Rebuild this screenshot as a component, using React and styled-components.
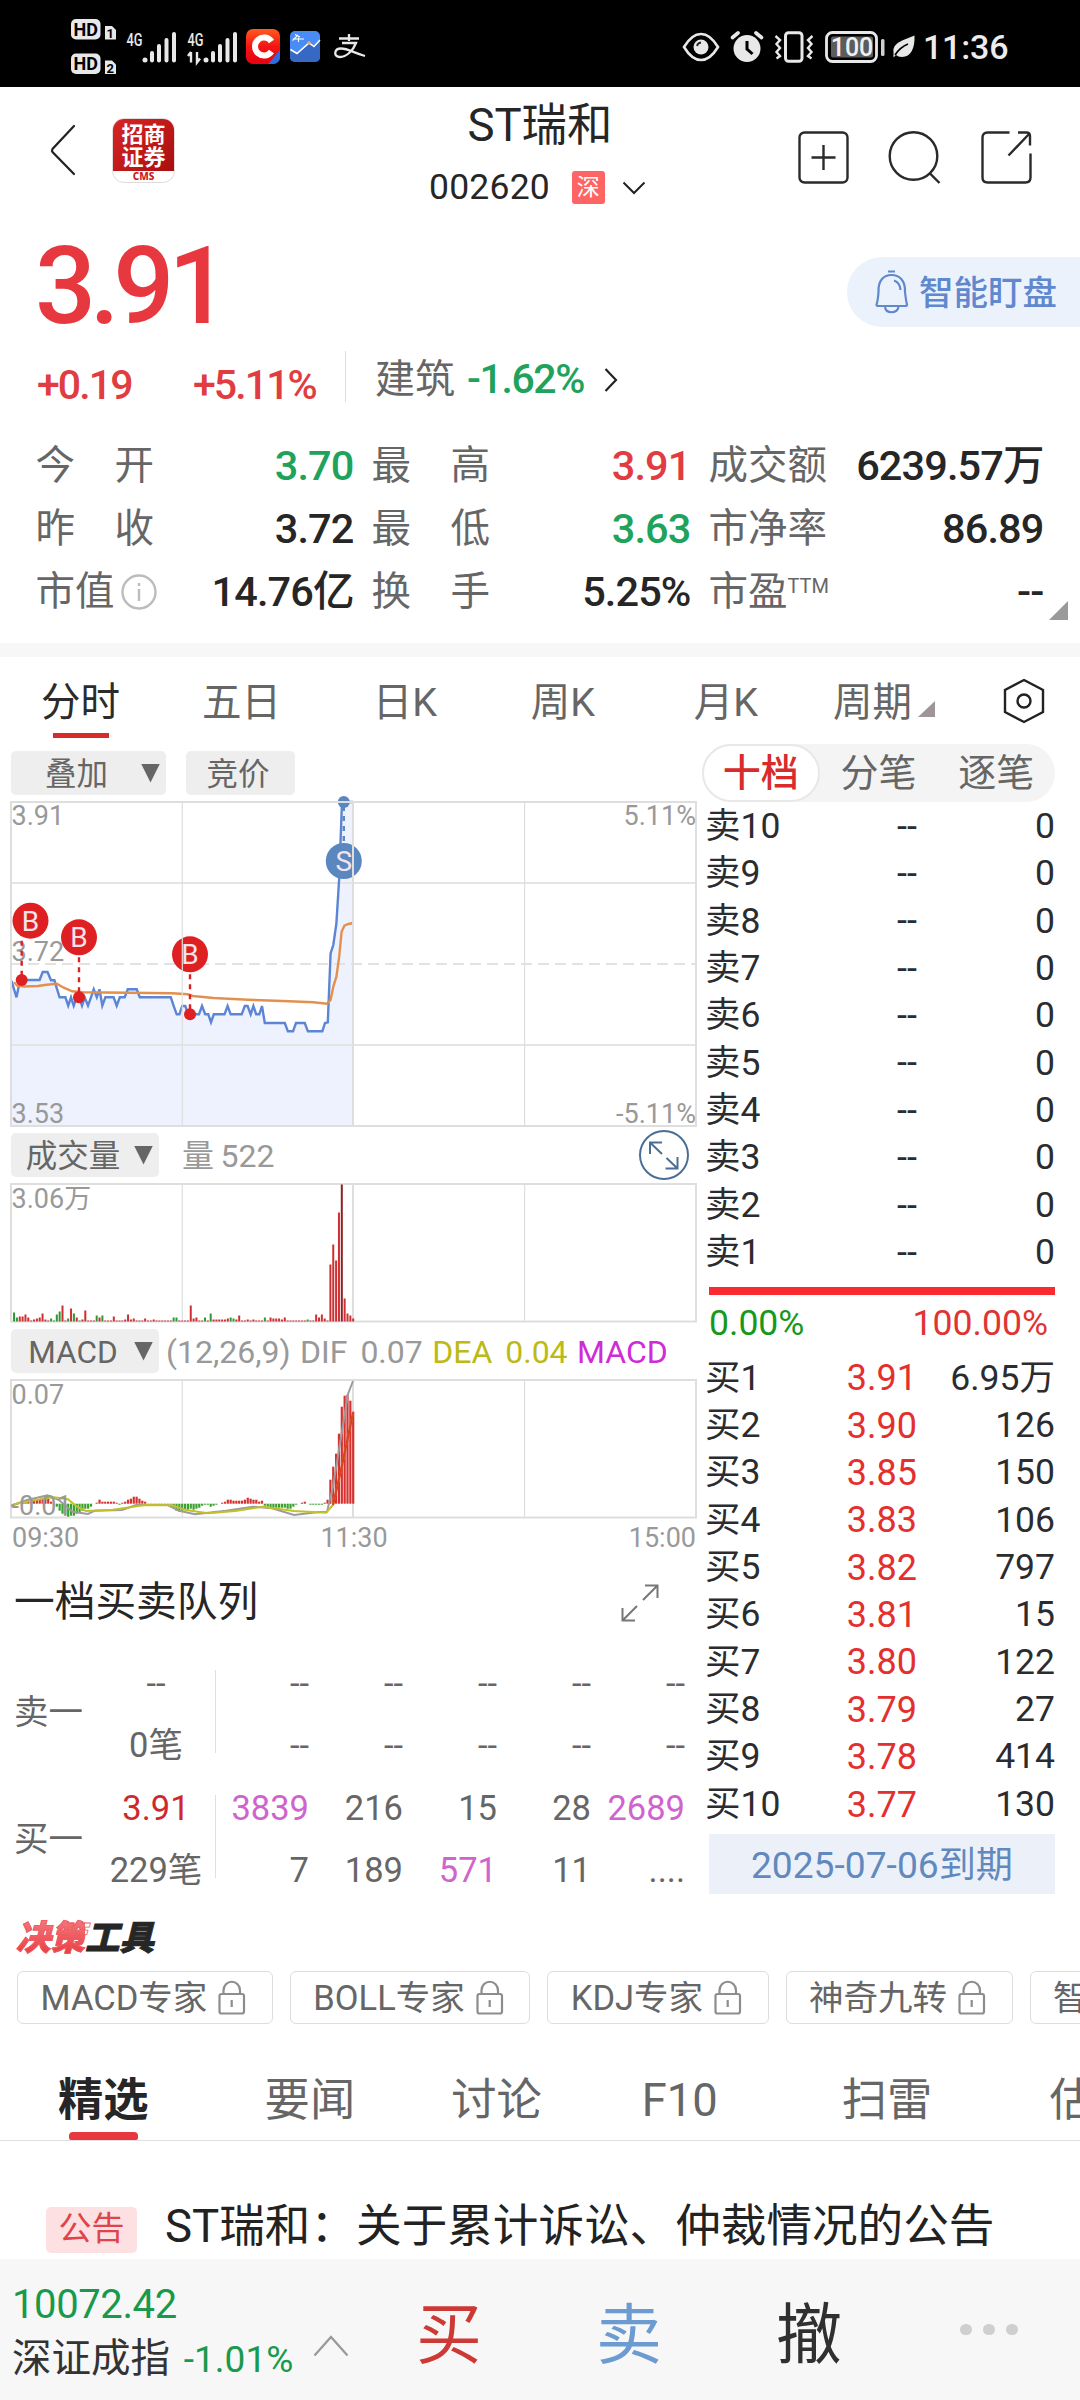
import React from 'react'
import styled, { createGlobalStyle } from 'styled-components'

const RED = '#e03c41'
const GREEN = '#1fa35c'

const stats = [
  { label: '今　开', value: '3.70', color: GREEN },
  { label: '最　高', value: '3.91', color: RED },
  { label: '成交额', value: '6239.57万' },
  { label: '昨　收', value: '3.72' },
  { label: '最　低', value: '3.63', color: GREEN },
  { label: '市净率', value: '86.89' },
  { label: '市值', value: '14.76亿', info: true },
  { label: '换　手', value: '5.25%' },
  { label: '市盈', sup: 'TTM', value: '--' },
]

const sells = [10, 9, 8, 7, 6, 5, 4, 3, 2, 1]

const buys = [
  ['3.91', '6.95万'],
  ['3.90', '126'],
  ['3.85', '150'],
  ['3.83', '106'],
  ['3.82', '797'],
  ['3.81', '15'],
  ['3.80', '122'],
  ['3.79', '27'],
  ['3.78', '414'],
  ['3.77', '130'],
]

const priceLine =
  '11.4,980.7 16.5,997.3 19,985 21.7,980 39.6,980 42.7,972 47.5,972 51,980.3 54.4,980.3 56.8,988.3 59.6,997.3 65.4,997.3 68.2,1005.7 71,997.3 73.7,1005.7 76.4,998 79.2,997.3 82,1005.7 84.7,997.3 88,1005.7 91,997.3 93.7,989.3 96.8,997.3 99.5,989.3 102.3,1005.7 105.4,997.3 113.6,997.3 116.7,1005.7 119.8,997.3 124.7,997.3 127.8,989.3 136.7,989.3 139.8,997.3 170.8,997.3 173.9,1006.7 176.7,1014.3 179.4,1014.3 182.2,1006 185.3,1006 187.7,1013 190,1014.3 199,1014.3 202,1006 205.2,1014.3 208.3,1014.3 211,1022.3 213.8,1014.3 224.5,1014.3 227.6,1006 230.7,1014.3 241.7,1014.3 244.8,1006 247.6,1006 250.7,1014.3 253.4,1006 256.2,1014.3 259.3,1014.3 262,1006 264.8,1023 284.8,1023 287.9,1031.3 293,1031.3 296,1023 304.8,1023 307.9,1031.3 322.3,1031.3 325,1023 327.8,1022.3 330.6,953.3 333.3,945 336.4,923.3 339.2,878 340.6,840 342,802 353,802'

const avgLine =
  '14,982.3 17.2,985.7 24,986.5 38,986 46.5,984.7 56.8,983.7 63.7,987.7 72.3,991.3 82.6,992.3 172,993.3 187.7,994.3 192.8,996 213.5,998 248,999.7 282.4,1001 313.4,1002.3 327,1003.7 330.6,1000 333.3,986.7 336.4,976.7 339.2,956.7 341.6,931.7 344.4,925.7 348.5,924 353,923'

const deaLine =
  '14,1504.3 27,1501.7 41,1499 54,1497.3 68,1499.3 77,1506.7 86,1511 113,1509.7 145,1505 172,1505.3 186,1510 208,1513.3 235,1511 263,1506.7 294,1511 326,1512.7 333,1505 341,1470 348,1437 353,1413'

const difLine =
  '11,1505.7 27,1500 47.5,1495.3 59,1500 72.5,1511.7 88,1514 95,1510.7 122,1510 136,1505 167.6,1505 179,1510.7 195,1514.3 226,1510.7 253,1506.7 272,1508.3 294,1515 317,1512.3 327,1511.7 333,1486.7 348,1394 353,1381'

// minute -> height, negative means a falling minute
const volume = {
  1: -9, 2: -4, 3: 5, 4: 5, 5: 7, 6: 4, 8: 2, 9: 3, 10: 4, 11: 8, 12: 2, 14: -3, 15: -1, 16: -7, 17: -10, 18: 16,
  20: -3, 21: 13, 22: -8, 23: 4, 24: -1, 25: 2, 26: 11, 30: -6, 31: 4, 32: -6, 36: 5, 40: 2, 41: 7, 42: 2, 43: 3,
  47: 3, 50: 2, 57: -4, 58: -4, 63: 16, 64: 3, 65: 4, 68: -4, 70: -8, 71: 2, 72: 2, 73: 2, 74: 2, 75: 2, 76: 3,
  77: -4, 78: -3, 79: 2, 80: 6, 83: 2, 85: 2, 89: -4, 91: 4, 92: 3, 93: 3, 94: 3, 95: 2, 96: 4, 99: 1, 104: -2,
  107: 7, 108: 4, 109: 7, 110: 3, 112: 57, 113: 77, 114: 61, 115: 109, 116: 137, 117: 23, 118: 8, 119: 6, 120: 3,
}

const macd = [
  0, -2, -1, 0, 1, 2, 4, 4, 4, 4, 4, 6, 6, 5, 2, 0, -3, -7, -10, -12, -13, -12, -12, -10, -9, -7, -5, -5, -3, 0, 1, 4, 2,
  2, 2, 2, 2, 1, -1, 1, 2, 4, 5, 7, 7, 5, 3, 2, -1, -1, -1, -1, -1, -1, -1, -1, -1, -4, -7, -8, -7, -6, -6, -5, -6, -5,
  -4, -2, -1, -1, -3, -2, -1, 0, 1, 2, 4, 4, 3, 3, 3, 3, 4, 6, 5, 4, 4, 2, 3, -2, -3, -4, -4, -4, -4, -4, -4, -5, -5,
  -3, -1, 0, 1, 2, 0, -1, -1, -1, -1, -1, 1, 4, 24, 37, 50, 70, 97, 108, 109, 103, 92,
]

const barX = (i) => 10.8 + i * 2.85

const Grid = ({ top, bottom }) => (
  <g stroke="#dedede" fill="none">
    <rect x="11" y={top} width="685" height={bottom - top} strokeWidth="2" />
    <path d={`M182.3 ${top}V${bottom}M524.6 ${top}V${bottom}`} strokeWidth="1.2" />
    <path d={`M353 ${top}V${bottom}`} strokeWidth="2" />
  </g>
)

const Marker = ({ x, y, dotX, dotY, letter, color }) => (
  <g>
    <path d={`M${dotX} ${y}V${dotY}`} stroke={color} strokeWidth="2.4" strokeDasharray="5 5" />
    <circle cx={dotX} cy={dotY} r="6" fill={color} />
    <circle cx={x} cy={y} r="18" fill={color} />
    <text x={x} y={y + 10} fontSize="28" textAnchor="middle">{letter}</text>
  </g>
)

const PriceChart = () => (
  <Chart height={338} viewBox="0 795 697 338">
    <polygon points={`11.4,1126 ${priceLine} 353,1126`} fill="#edf2fe" />
    <path d="M11 883H696M11 1045H696" stroke="#e4e4e4" strokeWidth="2" />
    <path d="M11 964H696" stroke="#e2e2e2" strokeWidth="2" strokeDasharray="11 6" />
    <polyline points={priceLine} fill="none" stroke="#5c85d6" strokeWidth="2.4" />
    <polyline points={avgLine} fill="none" stroke="#e3904f" strokeWidth="2.4" />
    <text x="11.5" y="961">3.72</text>
    <Marker x={30.5} y={920.7} dotX={21.7} dotY={980} letter="B" color="#df2023" />
    <Marker x={79} y={937.3} dotX={79} dotY={997.3} letter="B" color="#df2023" />
    <Marker x={190} y={954.3} dotX={190} dotY={1014.3} letter="B" color="#df2023" />
    <Marker x={343.8} y={861} dotX={343.8} dotY={802} letter="S" color="#5b87c1" />
    <Grid top={802} bottom={1126} />
    <text x="11.5" y="825">3.91</text>
    <text x="11.5" y="1123">3.53</text>
    <text x="696" y="825" textAnchor="end">5.11%</text>
    <text x="696" y="1123" textAnchor="end">-5.11%</text>
  </Chart>
)

const VolumeChart = () => (
  <Chart height={152} viewBox="0 1177 697 152">
    <Grid top={1184} bottom={1321.5} />
    {Array.from({ length: 120 }, (_, k) => {
      const v = volume[k + 1] || 1
      return (
        <rect
          key={k}
          x={barX(k + 1) - 0.6}
          y={1321.5 - Math.abs(v)}
          width="2"
          height={Math.abs(v)}
          fill={v < 0 ? '#2f9a33' : k === 115 ? '#8f2024' : '#cc3033'}
        />
      )
    })}
    <text x="11.5" y="1208">3.06万</text>
  </Chart>
)

const MacdChart = () => (
  <Chart height={151} viewBox="0 1373 697 151">
    <Grid top={1380} bottom={1517.5} />
    {macd.map((v, i) => (
      <rect
        key={i}
        x={barX(i) - 0.7}
        y={v > 0 ? 1503.7 - v : 1503.7}
        width="2.2"
        height={Math.abs(v)}
        fill={v > 0 ? '#d8302f' : '#3aa12c'}
      />
    ))}
    <polyline points={difLine} fill="none" stroke="#9c9c9c" strokeWidth="2" />
    <polyline points={deaLine} fill="none" stroke="#c4bf2a" strokeWidth="2" />
    <path d="M333 1505L341 1470L348 1437L353 1413" fill="none" stroke="#d8421f" strokeWidth="2.2" />
    <text x="11.5" y="1404">0.07</text>
    <text x="11.5" y="1515">-0.01</text>
  </Chart>
)

const Signal = ({ data }) => (
  <svg width="51" height="32" viewBox="0 0 51 32" fill="#e8e8e8">
    <text x="0.5" y="14.5" fontSize="18" fontWeight="500" textLength="16" lengthAdjust="spacingAndGlyphs">4G</text>
    <circle cx="19" cy="29" r="2.5" />
    <rect x="24" y="20" width="4" height="11.5" rx="2" />
    <rect x="31" y="13" width="4" height="18.5" rx="2" />
    <rect x="38.5" y="7" width="4" height="24.5" rx="2" />
    <rect x="46" y="1" width="4" height="30.5" rx="2" />
    {data && <path d="M4 21V31.5M4 21L1 25M10 21V31.5L13 27.5" stroke="#e8e8e8" strokeWidth="2.4" fill="none" />}
  </svg>
)

const HdBadges = () => (
  <svg width="45" height="55" viewBox="0 0 45 55">
    {[0, 34.5].map((y, i) => (
      <g key={y}>
        <rect x="0" y={y} width="29.5" height="20.5" rx="5" fill="#e8e8e8" />
        <text x="14.7" y={y + 16.5} fontSize="18" fontWeight="700" textAnchor="middle" fill="#000">HD</text>
        <path d={`M34 ${y + 7}h7l4 4v9.500h-11z`} fill="#e8e8e8" />
        <text x="39.3" y={y + 19} fontSize="13" fontWeight="700" textAnchor="middle" fill="#000">{i + 1}</text>
      </g>
    ))}
  </svg>
)

const AppC = () => (
  <svg width="34" height="35" viewBox="0 0 34 35">
    <defs>
      <linearGradient id="cGrad" x1="0" y1="0" x2="0" y2="1">
        <stop offset="0" stopColor="#ff5a1f" />
        <stop offset="0.5" stopColor="#f41414" />
        <stop offset="1" stopColor="#e60012" />
      </linearGradient>
    </defs>
    <rect width="34" height="35" rx="7" fill="url(#cGrad)" />
    <path d="M34 21V28a7 7 0 0 1-7 7H22Z" fill="#2d6be0" />
    <path d="M25.5 12.5A9 9 0 1 0 25.500 22.500" fill="none" stroke="#fff" strokeWidth="6" />
  </svg>
)

const AppStock = () => (
  <svg width="30" height="31" viewBox="0 0 30 31">
    <rect width="30" height="31" rx="5" fill="#4a8cf5" />
    <path d="M0 20L7 23L19 12L24 16L30 10V26a5 5 0 0 1-5 5H5a5 5 0 0 1-5-5Z" fill="#3569c4" />
    <path d="M0.500 18.500L7 22.500L19 12L24 15.500L30 9" fill="none" stroke="#fff" strokeWidth="1.5" />
    <path d="M2.500 9.500L8 4M5 3.500L10 6M3 8H14M8.500 6.500V11" stroke="#fff" strokeWidth="1.100" />
    <circle cx="19" cy="12" r="1.8" fill="#e8b06a" />
  </svg>
)

const AppPay = () => (
  <svg width="32" height="25" viewBox="0 0 32 25" fill="none" stroke="#e8e8e8" strokeWidth="2.3">
    <path d="M15 0V7M5 4.500H25M8 9H22C19 17 12 23 6 23C-1 23 0 14.500 7 14.500C14 14.500 20 19 31 22" />
  </svg>
)

const StatusIcons = () => (
  <>
    <svg width="38" height="30" viewBox="0 0 38 30" fill="none" stroke="#e8e8e8" strokeWidth="2.6">
      <path d="M2 15C8 5 13 2 19 2S30 5 36 15C30 25 25 28 19 28S8 25 2 15Z" />
      <circle cx="19" cy="15" r="7.5" fill="#e8e8e8" stroke="none" />
      <path d="M15 14A4.500 4.500 0 0 1 19 10.500" stroke="#222" strokeWidth="1.8" />
    </svg>
    <svg width="32" height="31" viewBox="0 0 32 31">
      <circle cx="16" cy="17.5" r="13.5" fill="#e8e8e8" />
      <path d="M16 10V18L21.500 23" fill="none" stroke="#000" strokeWidth="3" />
      <path d="M1.500 6.500L7 2M30.500 6.500L25 2" stroke="#e8e8e8" strokeWidth="3.6" strokeLinecap="round" />
    </svg>
    <svg width="40" height="32" viewBox="0 0 40 32" fill="none" stroke="#e8e8e8" strokeWidth="3">
      <rect x="11.5" y="1.8" width="16.5" height="28.5" rx="3" />
      <path d="M1.500 5L6 9L2.500 13L6 17L2.500 21L6 25L2.500 27.500M38.500 5L34 9L37.500 13L34 17L37.500 21L34 25L37.500 27.500" strokeWidth="2.4" />
    </svg>
    <svg width="60" height="32" viewBox="0 0 60 32">
      <rect x="1.5" y="1.5" width="50" height="29" rx="6" fill="none" stroke="#e8e8e8" strokeWidth="2.8" />
      <rect x="6" y="5.5" width="42" height="21" rx="2" fill="#5c5c5c" />
      <text x="27" y="24.5" fontSize="25" fontWeight="500" textAnchor="middle" fill="#f0f0f0">100</text>
      <rect x="56" y="8" width="3.5" height="17" rx="1.5" fill="#d0d0d0" />
    </svg>
    <svg width="22" height="23" viewBox="0 0 22 23">
      <path d="M21.500 0.500C22 13 18 22 9 22C6 22 4.500 21 3 20L0.500 22.500L0.500 17C-0.500 7 12 5 21.500 0.500Z" fill="#e8e8e8" />
      <path d="M2 20C6 14 10 11 15 9" stroke="#000" strokeWidth="1.8" fill="none" />
    </svg>
  </>
)

const Lock = () => (
  <svg width="28" height="36" viewBox="0 0 28 36" fill="none" stroke="#8d8d8d" strokeWidth="2.2">
    <rect x="1.5" y="14" width="24.5" height="19.5" rx="2" />
    <path d="M5.500 14V10.500a8.200 8.700 0 0 1 16.500 0V14M13.700 20V27" />
  </svg>
)

const Stat = ({ label, value, color, info, sup }) => (
  <StatCell>
    <StatLabel>
      {label}
      {sup && <sup>{sup}</sup>}
      {info && (
        <svg width="36" height="36" viewBox="0 0 36 36" fill="none" stroke="#bcbcbc" strokeWidth="2.4">
          <circle cx="18" cy="18" r="16.5" />
          <path d="M18 15V27M18 9V12" />
        </svg>
      )}
    </StatLabel>
    <StatValue $color={color}>{value}</StatValue>
  </StatCell>
)

const QueueBlock = ({ name, price, count, rows, red }) => (
  <QueueBox>
    <QueueName $red={red}>{name}</QueueName>
    <QueueTotals>
      <QueueCell $color={red && '#cf2a2b'}>{price}</QueueCell>
      <QueueCell>{count}</QueueCell>
    </QueueTotals>
    <QueueLine />
    <QueueGrid>
      {rows.map((v, i) => (
        <QueueCell key={i} $end $color={['3839', '2689', '571'].includes(v) && '#cf64cf'}>{v}</QueueCell>
      ))}
    </QueueGrid>
  </QueueBox>
)

const App = () => {
  return (
    <>
      <GlobalStyle />
      <Page>
        <StatusBar>
          <StatusLeft>
            <HdBadges />
            <Signal />
            <Signal data />
            <AppC />
            <AppStock />
            <AppPay />
          </StatusLeft>
          <StatusRight>
            <StatusIcons />
            <Clock>11:36</Clock>
          </StatusRight>
        </StatusBar>

        <Header>
          <HeaderLeft>
            <svg width="26" height="52" viewBox="0 0 26 52" fill="none" stroke="#222" strokeWidth="2.2" strokeLinecap="round">
              <path d="M24 2L2.500 25Q1.500 26.500 2.500 28L24 50" />
            </svg>
            <BrokerLogo>
              <BrokerName>招商<br />证券</BrokerName>
              <BrokerCode>CMS</BrokerCode>
            </BrokerLogo>
          </HeaderLeft>
          <HeaderTitle>
            <StockName>ST瑞和</StockName>
            <StockCode>
              002620
              <Exchange>深</Exchange>
              <svg width="24" height="14" viewBox="0 0 24 14" fill="none" stroke="#222" strokeWidth="2">
                <path d="M1.500 1.500L12 12L22.500 1.500" />
              </svg>
            </StockCode>
          </HeaderTitle>
          <HeaderIcons>
            <svg width="51" height="53" viewBox="0 0 51 53" fill="none" stroke="#2a2a2a" strokeWidth="2.4">
              <rect x="1.5" y="1.5" width="48" height="50" rx="5" />
              <path d="M25.500 14V39M13.500 26.500H37.500" />
            </svg>
            <svg width="52" height="53" viewBox="0 0 52 53" fill="none" stroke="#2a2a2a" strokeWidth="2.4">
              <circle cx="24.5" cy="25" r="23.8" />
              <path d="M40.500 42L50.500 52" />
            </svg>
            <svg width="51" height="53" viewBox="0 0 51 53" fill="none" stroke="#2a2a2a" strokeWidth="2.4">
              <path d="M28.500 1.500H6.500Q1.500 1.500 1.500 6.500V46.500Q1.500 51.500 6.500 51.500H44.500Q49.500 51.500 49.500 46.500V22.500" />
              <path d="M37 1.500H45.500Q49 1.500 49 5V14.500M48.500 2.500L27.500 24.500" />
            </svg>
          </HeaderIcons>
        </Header>

        <PriceRow>
          <Price>3.91</Price>
          <WatchPill>
            <svg width="34" height="44" viewBox="0 0 34 44" fill="none" stroke="#5f88cf" strokeWidth="2.2">
              <path d="M13 1.500H20M1.500 34.500Q3 30 3.500 22C3 10 9 5 16.500 5S30.500 10 30 22Q31 31 32 34.500Q32 36 30 36H3.500Q1.500 36 1.500 34.500ZM10 37C11 44 22 44 23.500 37M19 10.500Q25 12.500 25.500 20" />
            </svg>
            <span>智能盯盘</span>
          </WatchPill>
        </PriceRow>

        <ChangeRow>
          <Change $width={156}>+0.19</Change>
          <Change $width={153}>+5.11%</Change>
          <ChangeDivider />
          <Industry>
            建筑 <b>-1.62%</b>
            <svg width="14" height="24" viewBox="0 0 14 24" fill="none" stroke="#222" strokeWidth="2.2">
              <path d="M1.500 1L12 12L1.500 23" />
            </svg>
          </Industry>
        </ChangeRow>

        <Stats>
          {stats.map((s) => (
            <Stat key={s.label} {...s} />
          ))}
          <StatsCorner />
        </Stats>
        <Band />

        <PeriodTabs>
          <PeriodTab $active>分时</PeriodTab>
          <PeriodTab>五日</PeriodTab>
          <PeriodTab>日K</PeriodTab>
          <PeriodTab>周K</PeriodTab>
          <PeriodTab>月K</PeriodTab>
          <PeriodMore>周期<i /></PeriodMore>
          <svg width="42" height="46" viewBox="0 0 42 46" fill="none" stroke="#222" strokeWidth="2.4">
            <path d="M21 2L40 12V34L21 44L2 34V12Z" />
            <circle cx="21" cy="23" r="6.5" />
          </svg>
        </PeriodTabs>

        <Market>
          <Left>
            <ToolRow $gap={20}>
              <ToolButton $width={155}>
                <span>叠加</span>
                <Caret />
              </ToolButton>
              <ToolButton $width={109}>
                <span>竞价</span>
              </ToolButton>
            </ToolRow>
            <PriceChart />
            <ToolRow $gap={23}>
              <ToolButton $width={148}>
                <span>成交量</span>
                <Caret />
              </ToolButton>
              <Legend>量 522</Legend>
              <svg width="50" height="50" viewBox="0 0 50 50" fill="none" stroke="#4a6f96" strokeWidth="2">
                <circle cx="25" cy="25" r="24" />
                <path d="M23 24L11 12.500M11 24V12.500H23M27.500 28L38.500 38.500M38.500 27V38.500H26.500" />
              </svg>
            </ToolRow>
            <VolumeChart />
            <ToolRow $gap={7}>
              <ToolButton $width={148}>
                <span>MACD</span>
                <Caret />
              </ToolButton>
              <MacdLegend>
                <Legend>(12,26,9)</Legend>
                <Legend>DIF&nbsp; 0.07</Legend>
                <Legend $color="#bdb915">DEA&nbsp; 0.04</Legend>
                <Legend $color="#cf2bd6">MACD</Legend>
              </MacdLegend>
            </ToolRow>
            <MacdChart />
            <Times>
              <span>09:30</span>
              <span>11:30</span>
              <span>15:00</span>
            </Times>

            <QueueTitle>
              一档买卖队列
              <svg width="38" height="38" viewBox="0 0 38 38" fill="none" stroke="#777" strokeWidth="2">
                <path d="M22 16L36.500 1.500M24 1.500H36.500V14M16 22L1.500 36.500M1.500 24V36.500H14" />
              </svg>
            </QueueTitle>
            <QueueBlock name="卖一" price="--" count="0笔" rows={Array(10).fill('--')} />
            <QueueBlock
              name="买一"
              price="3.91"
              count="229笔"
              red
              rows={['3839', '216', '15', '28', '2689', '7', '189', '571', '11', '....']}
            />
          </Left>

          <Right>
            <Segments>
              <Segment $active>十档</Segment>
              <Segment>分笔</Segment>
              <Segment>逐笔</Segment>
            </Segments>
            {sells.map((n) => (
              <BookRow key={n}>
                <span>卖{n}</span>
                <span>--</span>
                <span>0</span>
              </BookRow>
            ))}
            <RatioBar />
            <Ratio>
              <span>0.00%</span>
              <span>100.00%</span>
            </Ratio>
            {buys.map(([price, amount], i) => (
              <BookRow key={price} $red>
                <span>买{i + 1}</span>
                <span>{price}</span>
                <span>{amount}</span>
              </BookRow>
            ))}
            <Expire>2025-07-06到期</Expire>
          </Right>
        </Market>

        <ToolsTitle>
          <em>决策</em>工具
        </ToolsTitle>
        <Chips>
          {['MACD专家', 'BOLL专家', 'KDJ专家', '神奇九转', '智能'].map((c) => (
            <Chip key={c}>
              {c}
              <Lock />
            </Chip>
          ))}
        </Chips>

        <NewsTabs>
          <NewsTab $active $left={58}>精选</NewsTab>
          <NewsTab $left={116}>要闻</NewsTab>
          <NewsTab $left={96}>讨论</NewsTab>
          <NewsTab $left={100}>F10</NewsTab>
          <NewsTab $left={124}>扫雷</NewsTab>
          <NewsTab $left={117}>估值</NewsTab>
        </NewsTabs>
        <News>
          <NewsBadge>公告</NewsBadge>
          <NewsTitle>ST瑞和：关于累计诉讼、仲裁情况的公告</NewsTitle>
        </News>

        <BottomBar>
          <IndexBox>
            <IndexValue>10072.42</IndexValue>
            <IndexName>
              深证成指 <span>-1.01%</span>
            </IndexName>
          </IndexBox>
          <svg width="36" height="22" viewBox="0 0 36 22" fill="none" stroke="#999" strokeWidth="2.2">
            <path d="M1.500 20.500L18 2L34.500 20.500" />
          </svg>
          <Action $color="#cd3a36">买</Action>
          <Action $color="#6b9bd0">卖</Action>
          <Action $color="#303030">撤</Action>
          <More>
            <i />
            <i />
            <i />
          </More>
        </BottomBar>
      </Page>
    </>
  )
}

const GlobalStyle = createGlobalStyle`
  * {
    box-sizing: border-box;
  }

  body {
    margin: 0;
    background: #fff;
  }

  svg {
    display: block;
    flex: none;
    overflow: visible;
  }
`

const Page = styled.div`
  display: flex;
  flex-direction: column;
  width: 1080px;
  height: 2400px;
  overflow: hidden;
  background: #fff;
  color: #262626;
  font-family: Roboto, "Noto Sans CJK SC", sans-serif;
  line-height: 1;
  white-space: nowrap;

  > * {
    flex: none;
  }
`

const StatusBar = styled.div`
  display: flex;
  justify-content: space-between;
  height: 87px;
  padding: 6px 71px 0;
  background: #000;
`

const StatusLeft = styled.div`
  display: flex;
  align-items: center;
  gap: 10px;

  svg:nth-of-type(4) {
    margin-left: -2px;
  }

  svg:nth-of-type(6) {
    margin-left: 4px;
  }
`

const StatusRight = styled.div`
  display: flex;
  align-items: center;
  gap: 11px;

  svg:nth-of-type(5) {
    margin-left: -3px;
  }
`

const Clock = styled.span`
  width: 86px;
  margin-left: -3px;
  font-size: 34px;
  font-weight: 500;
  letter-spacing: -0.2px;
  color: #ececec;
`

const Header = styled.div`
  display: grid;
  grid-template-columns: 1fr auto 1fr;
  height: 138px;
  padding: 0 48px 0 50px;
`

const HeaderLeft = styled.div`
  display: flex;
  align-items: center;
  gap: 36px;
  padding-bottom: 12px;
`

const BrokerLogo = styled.div`
  width: 63px;
  height: 65px;
  overflow: hidden;
  border-radius: 12px;
  border: 1px solid #e3dada;
  background: #fff;
  text-align: center;
`

const BrokerName = styled.div`
  height: 52px;
  padding-top: 4px;
  background: linear-gradient(135deg, #d92424, #a80f10);
  color: #fff;
  font-size: 22px;
  font-weight: 700;
  line-height: 23px;
`

const BrokerCode = styled.div`
  font-family: "Noto Sans", sans-serif;
  font-size: 10px;
  font-weight: 800;
  line-height: 10px;
  color: #c81d1f;
`

const HeaderTitle = styled.div`
  display: flex;
  flex-direction: column;
  align-items: center;
  padding-top: 16px;
`

const StockName = styled.div`
  margin-right: 2px;
  font-size: 45.5px;
  line-height: 46px;
`

const StockCode = styled.div`
  display: flex;
  align-items: center;
  margin-top: 21px;
  margin-right: 7px;
  font-size: 35.5px;
  letter-spacing: 0.2px;
`

const Exchange = styled.span`
  width: 33px;
  height: 33px;
  margin: 0 17px 0 22px;
  border-radius: 3px;
  background: #ff6464;
  color: #fff;
  font-size: 23px;
  line-height: 34px;
  text-align: center;
`

const HeaderIcons = styled.div`
  display: flex;
  justify-content: flex-end;
  align-items: center;
  gap: 40px;
  padding-top: 3px;
`

const PriceRow = styled.div`
  display: flex;
  justify-content: space-between;
  height: 117px;
  padding-left: 35px;
`

const Price = styled.div`
  font-size: 107.5px;
  font-weight: 500;
  line-height: 122px;
  letter-spacing: -6.3px;
  color: #e8383f;
`

const WatchPill = styled.div`
  display: flex;
  align-items: center;
  gap: 10px;
  width: 233px;
  height: 70px;
  margin-top: 32px;
  padding-left: 28px;
  border-radius: 35px 0 0 35px;
  background: #ecf2fb;
  color: #5f88cf;
  font-size: 34.5px;
  font-weight: 500;

  span {
    padding-top: 2px;
  }
`

const ChangeRow = styled.div`
  display: flex;
  align-items: flex-start;
  height: 92px;
  padding-left: 37px;
`

const Change = styled.div`
  width: ${(p) => p.$width}px;
  padding-top: 22px;
  font-size: 41px;
  font-weight: 500;
  letter-spacing: -1.9px;
  line-height: 43px;
  color: ${RED};
`

const ChangeDivider = styled.div`
  width: 1px;
  height: 51px;
  margin: 9px 29px 0 -1px;
  background: #ddd;
`

const Industry = styled.div`
  display: flex;
  align-items: center;
  padding-top: 16px;
  font-size: 40px;
  line-height: 43px;
  color: #666;

  b {
    margin: 0 20px 0 12px;
    font-size: 41px;
    font-weight: 500;
    letter-spacing: -1.4px;
    color: ${GREEN};
  }
`

const Stats = styled.div`
  position: relative;
  display: grid;
  grid-template-columns: 318px 319px 335px;
  grid-auto-rows: 63px;
  column-gap: 18px;
  height: 209px;
  padding-left: 35.5px;
`

const StatCell = styled.div`
  display: flex;
  justify-content: space-between;
  align-items: center;
`

const StatLabel = styled.div`
  display: flex;
  align-items: center;
  font-size: 39.5px;
  color: #666;

  sup {
    margin-bottom: 12px;
    font-size: 20px;
    line-height: 20px;
  }

  svg {
    margin-left: 6px;
  }
`

const StatValue = styled.div`
  font-size: 41.5px;
  font-weight: 500;
  letter-spacing: -0.9px;
  color: ${(p) => p.$color || '#262626'};
`

const StatsCorner = styled.i`
  position: absolute;
  right: 12px;
  bottom: 23px;
  width: 19px;
  height: 19px;
  background: #9a9a9a;
  clip-path: polygon(100% 0, 100% 100%, 0 100%);
`

const Band = styled.div`
  height: 14px;
  background: #f7f7f7;
`

const PeriodTabs = styled.div`
  display: grid;
  grid-template-columns: 161px 161px 166px 150px 176px 1fr auto;
  height: 87px;
  padding: 25px 35px 0 0;

  > svg {
    margin-top: -4px;
  }
`

const PeriodTab = styled.div`
  display: flex;
  flex-direction: column;
  align-items: center;
  gap: 9px;
  font-size: 39.5px;
  line-height: 42px;
  color: ${(p) => (p.$active ? '#2b2b2b' : '#666')};

  &::after {
    content: "";
    width: 56px;
    height: 5px;
    background: ${(p) => (p.$active ? '#d92b2e' : 'transparent')};
  }
`

const PeriodMore = styled.div`
  display: flex;
  padding-left: 19px;
  font-size: 39.5px;
  line-height: 42px;
  color: #666;

  i {
    width: 17px;
    height: 16px;
    margin: 19px 0 0 6px;
    background: #9f9596;
    clip-path: polygon(100% 0, 100% 100%, 0 100%);
  }
`

const Market = styled.div`
  display: flex;
  height: 1158px;
`

const Left = styled.div`
  width: 697px;
  padding-top: 7px;
`

const ToolRow = styled.div`
  display: flex;
  align-items: center;
  gap: ${(p) => p.$gap}px;
  height: 44px;
  padding-left: 11px;

  > svg {
    margin: 0 8px 0 auto;
  }
`

const ToolButton = styled.div`
  display: flex;
  align-items: center;
  width: ${(p) => p.$width}px;
  height: 44px;
  padding-right: 6px;
  border-radius: 5px;
  background: #eee;
  color: #666;
  font-size: 31.5px;

  span {
    flex: 1;
    padding: 3px 0 0 1px;
    text-align: center;
  }
`

const Caret = styled.i`
  width: 19px;
  height: 19px;
  background: #666;
  clip-path: polygon(0 0, 100% 0, 50% 100%);
`

const Legend = styled.span`
  padding-top: 2px;
  font-size: 32px;
  word-spacing: -1.5px;
  color: ${(p) => p.$color || '#999'};
`

const MacdLegend = styled.div`
  display: flex;
  gap: 9.5px;
`

const Chart = styled.svg`
  width: 697px;
  height: ${(p) => p.height}px;

  text {
    font-size: 27px;
    fill: #999;
  }

  g text {
    font-size: 28px;
    fill: #f4e4ea;
  }
`

const Times = styled.div`
  display: flex;
  justify-content: space-between;
  height: 30px;
  padding: 1px 1px 0 12px;
  font-size: 27px;
  color: #999;
`

const QueueTitle = styled.div`
  display: flex;
  justify-content: space-between;
  align-items: center;
  height: 98px;
  padding: 0 38px 1px 14px;
  font-size: 40.7px;
`

const QueueBox = styled.div`
  display: flex;
  align-items: center;
  height: 125px;
  font-size: 34.5px;
  color: #666;
`

const QueueName = styled.div`
  width: 100px;
  padding: 0 0 ${(p) => (p.$red ? 0 : 4)}px 14px;
`

const QueueTotals = styled.div`
  display: grid;
  grid-template-rows: 62.5px 62.5px;
  width: 112px;
  justify-items: center;
`

const QueueLine = styled.div`
  width: 1px;
  height: 83px;
  margin: 0 -1px 6px 3px;
  background: #e0e0e0;
`

const QueueGrid = styled.div`
  display: grid;
  grid-template-columns: repeat(5, 94px);
  grid-auto-rows: 62.5px;
`

const QueueCell = styled.div`
  display: flex;
  align-items: center;
  justify-content: ${(p) => (p.$end ? 'flex-end' : 'center')};
  padding-bottom: 1px;
  color: ${(p) => p.$color || '#666'};
`

const Right = styled.div`
  width: 358px;
  padding-left: 12px;
`

const Segments = styled.div`
  display: flex;
  width: 353px;
  height: 58px;
  margin-left: -7px;
  border-radius: 29px;
  background: #f4f4f4;
`

const Segment = styled.div`
  flex: 1;
  border: 2px solid ${(p) => (p.$active ? '#e8e8e8' : 'transparent')};
  border-radius: 29px;
  background: ${(p) => (p.$active ? '#fff' : 'transparent')};
  color: ${(p) => (p.$active ? '#d92b2b' : '#666')};
  font-size: 38px;
  font-weight: ${(p) => (p.$active ? 500 : 400)};
  line-height: 55px;
  text-align: center;
`

const BookRow = styled.div`
  display: grid;
  grid-template-columns: 100px 112px 138px;
  align-items: center;
  height: 47.36px;
  margin-left: -4px;
  padding-top: 2px;
  font-size: 35.5px;
  color: #2a2c30;

  span + span {
    text-align: right;
  }

  span:nth-child(2) {
    font-size: 36px;
    color: ${(p) => (p.$red ? '#e3302f' : 'inherit')};
  }
`

const RatioBar = styled.div`
  height: 8px;
  margin-top: 11px;
  background: #f92b30;
`

const Ratio = styled.div`
  display: flex;
  justify-content: space-between;
  height: 59px;
  padding: 11px 7px 0 0;
  font-size: 35.6px;
  color: #16991a;

  span + span {
    color: #e03434;
  }
`

const Expire = styled.div`
  height: 60px;
  margin-top: 7px;
  background: #ecf1f9;
  color: #6189bd;
  font-size: 37.2px;
  line-height: 62px;
  text-align: center;
`

const ToolsTitle = styled.div`
  height: 69px;
  padding: 19px 0 0 16px;
  font-size: 34.5px;
  font-style: italic;
  font-weight: 900;
  color: #262626;
  -webkit-text-stroke: 0.8px #262626;

  em {
    background: linear-gradient(#f47a7e, #e8383f);
    background-clip: text;
    -webkit-background-clip: text;
    -webkit-text-stroke: 0.8px #ee5a5f;
    color: transparent;
  }
`

const Chips = styled.div`
  display: flex;
  gap: 17px;
  padding-left: 17px;
`

const Chip = styled.div`
  display: flex;
  flex: none;
  align-items: center;
  gap: 11px;
  height: 53px;
  padding: 1px 25.5px 0 22.5px;
  border: 1px solid #ddd;
  border-radius: 6px;
  color: #666;
  font-size: 34.5px;
`

const NewsTabs = styled.div`
  display: flex;
  height: 117px;
  padding-top: 54px;
  border-bottom: 1px solid #e0e0e0;
`

const NewsTab = styled.div`
  display: flex;
  flex: none;
  flex-direction: column;
  align-items: center;
  gap: 8px;
  margin-left: ${(p) => p.$left}px;
  font-size: 45.3px;
  font-weight: ${(p) => (p.$active ? 700 : 400)};
  line-height: 46px;
  color: ${(p) => (p.$active ? '#262626' : '#666')};

  &::after {
    content: "";
    width: 69px;
    height: 8px;
    border-radius: 4px 4px 2px 2px;
    background: ${(p) => (p.$active ? '#e8383f' : 'transparent')};
  }
`

const News = styled.div`
  display: flex;
  align-items: flex-start;
  height: 118px;
  padding: 61px 0 0 46px;
`

const NewsBadge = styled.span`
  width: 91px;
  height: 46px;
  margin: 5px 28px 0 0;
  border-radius: 5px;
  background: #fce0e2;
  color: #e0434a;
  font-size: 33px;
  line-height: 43px;
  text-align: center;
`

const NewsTitle = styled.span`
  font-size: 45.6px;
  line-height: 49px;
  color: #222;
`

const BottomBar = styled.div`
  display: flex;
  align-items: center;
  height: 141px;
  background: #f7f7f8;

  > svg {
    margin: 32px 0 0 19px;
  }
`

const IndexBox = styled.div`
  width: 294px;
  padding: 0 0 0 12px;
`

const IndexValue = styled.div`
  margin-top: 4px;
  font-size: 40px;
  letter-spacing: -0.4px;
  color: #18994b;
`

const IndexName = styled.div`
  margin-top: 14px;
  font-size: 39.5px;
  color: #333;

  span {
    margin-left: 4px;
    font-size: 37px;
    color: #18994b;
  }
`

const Action = styled.div`
  width: 180px;
  padding-top: 12px;
  font-size: 66px;
  text-align: center;
  color: ${(p) => p.$color};

  svg + & {
    margin-left: 10px;
  }
`

const More = styled.div`
  display: flex;
  gap: 11.5px;
  margin-left: 61px;

  i {
    width: 11.5px;
    height: 11.5px;
    border-radius: 50%;
    background: #cfcfcf;
  }
`

export default App
